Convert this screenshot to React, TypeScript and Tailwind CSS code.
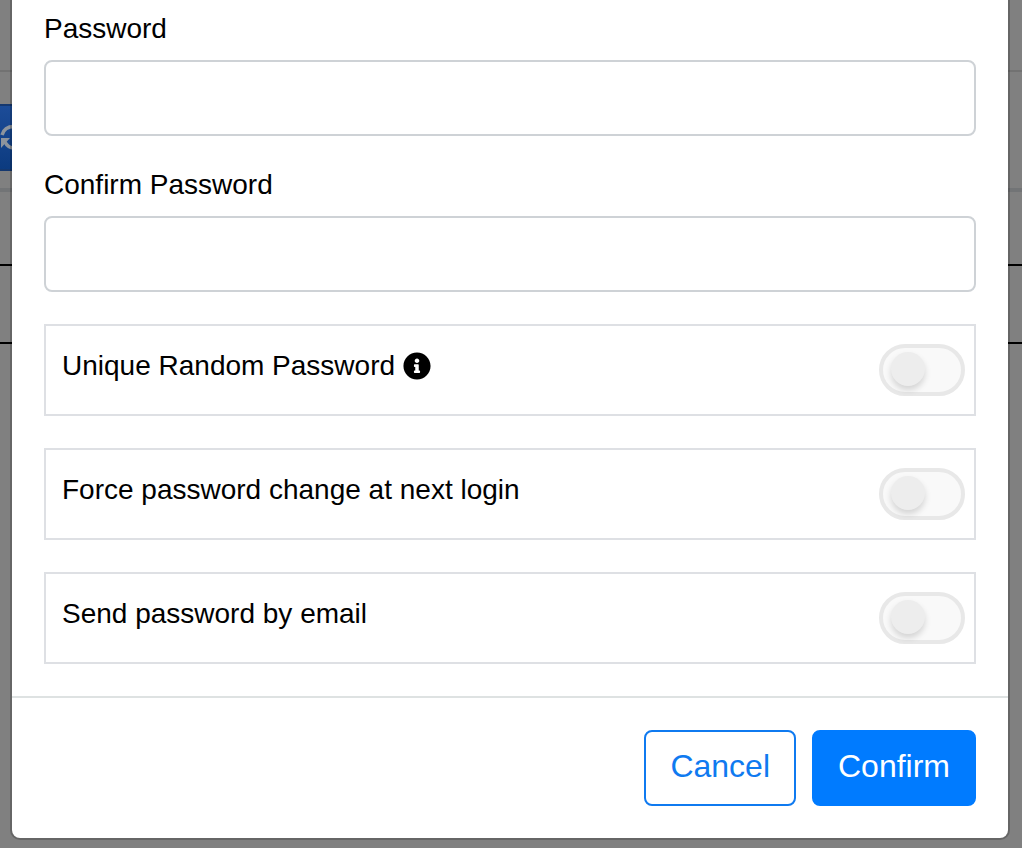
import React from 'react';

const fields = [
  { id: 'password', label: 'Password' },
  { id: 'confirm-password', label: 'Confirm Password' },
];

const options = [
  { id: 'unique-random', label: 'Unique Random Password', info: true },
  { id: 'force-change', label: 'Force password change at next login', info: false },
  { id: 'send-email', label: 'Send password by email', info: false },
];

const InfoIcon = () => (
  <svg className="w-7 h-7 shrink-0" viewBox="0 0 512 512" fill="currentColor" aria-hidden="true">
    <path d="M256 8C119 8 8 119 8 256s111 248 248 248 248-111 248-248S393 8 256 8zm0 110c23.200 0 42 18.800 42 42s-18.800 42-42 42-42-18.800-42-42 18.800-42 42-42zm56 254c0 6.600-5.400 12-12 12h-88c-6.600 0-12-5.400-12-12v-24c0-6.600 5.400-12 12-12h12v-64h-12c-6.600 0-12-5.400-12-12v-24c0-6.600 5.400-12 12-12h64c6.600 0 12 5.400 12 12v100h12c6.600 0 12 5.400 12 12v24z" />
  </svg>
);

const RefreshIcon = () => (
  <svg className="w-7 h-7 shrink-0" viewBox="0 0 28 28" fill="none" aria-hidden="true">
    <path d="M2 11C3.500 5.500 8 2.500 14 2.500S24.500 5.500 26 11M5 18c2 4 5 6 9 6s7-2 9-6" stroke="#8d949d" strokeWidth="3.5" />
    <path d="M1 14h9L1 24zM27 14h-9l9 10z" fill="#8d949d" />
  </svg>
);

const PageBehind = () => (
  <div className="col-start-1 row-start-1 bg-[#808080]" aria-hidden="true">
    <div className="h-[72px] border-b-2 border-[#727272]" />
    <div className="h-[120px] pt-8 border-b-4 border-[#727476]">
      <div className="flex items-center w-10 h-[67px] bg-linear-to-b from-[#1c4c98] to-[#0c3b80] border-y-2 border-[#15386f]">
        <RefreshIcon />
      </div>
    </div>
    <div className="h-[74px] border-b-2 border-black" />
    <div className="h-[78px] border-b-2 border-black" />
  </div>
);

const PasswordModal = () => {
  return (
    <div
      role="dialog"
      aria-label="Set password"
      className="col-start-1 row-start-1 self-start ml-3 mr-3.5 mb-2.5 bg-white rounded-b-lg ring-2 ring-black/20"
    >
      <form>
        <div className="px-8 pt-3 pb-8 space-y-8">
          {fields.map((field) => (
            <div key={field.id}>
              <label htmlFor={field.id} className="block mb-3.5 text-[28px] leading-[34px]">
                {field.label}
              </label>
              <input
                id={field.id}
                type="password"
                className="block w-full h-[76px] px-6 text-[28px] border-2 border-[#ced2d6] rounded-lg"
              />
            </div>
          ))}

          {options.map((option) => (
            <div
              key={option.id}
              className="flex items-start justify-between pl-4 pr-[9px] py-[18px] border-2 border-[#dee0e4]"
            >
              <label htmlFor={option.id} className="flex items-center gap-2 text-[28px] leading-[44px]">
                {option.label}
                {option.info && <InfoIcon />}
              </label>
              {/* Toggle */}
              <input
                id={option.id}
                type="checkbox"
                className="appearance-none shrink-0 w-[86px] h-[52px] pl-2 pt-1 bg-[#f9f9f9] border-4 border-[#e8e8e8] rounded-full before:block before:size-[34px] before:rounded-full before:bg-[#ededed] before:shadow-[0_4px_6px_rgba(0,0,0,0.15)] checked:bg-[#007bff] checked:before:translate-x-7"
              />
            </div>
          ))}
        </div>

        <div className="flex justify-end gap-4 p-8 border-t-2 border-[#dee2e2]">
          <button
            type="button"
            className="h-[76px] px-6 pb-1 text-[32px] text-[#0f7af0] border-2 border-[#0f7af0] rounded-lg"
          >
            Cancel
          </button>
          <button
            type="submit"
            className="h-[76px] px-6 pb-1 text-[32px] text-white bg-[#007bff] border-2 border-[#007bff] rounded-lg"
          >
            Confirm
          </button>
        </div>
      </form>
    </div>
  );
};

const App = () => {
  return (
    <main className="grid min-h-screen bg-[#808080] text-black font-['Liberation_Sans',Arial,sans-serif]">
      <PageBehind />
      <PasswordModal />
    </main>
  );
};

export default App;
